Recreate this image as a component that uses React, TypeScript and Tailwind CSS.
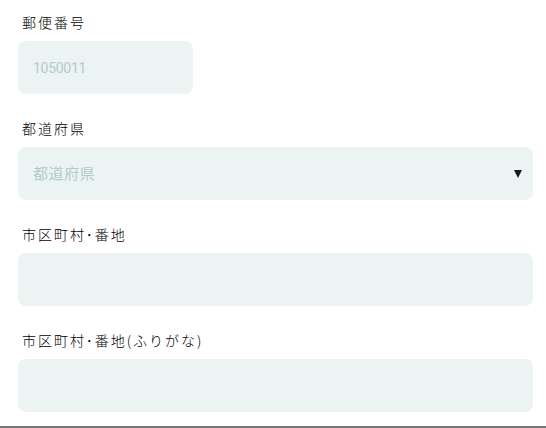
import React from "react";

const font = { fontFamily: '"Noto Sans CJK JP", "Noto Sans", sans-serif' };

function Label({ children }: { children: React.ReactNode }) {
  return (
    <div className="pl-1 h-5 text-[14px] leading-5 tracking-[0.14em] font-light text-black">{children}</div>
  );
}

export default function App() {
  return (
    <div className="w-[546px] h-[428px] bg-white border-b-2 border-[#777] overflow-hidden" style={font}>
      <div className="flex flex-col pt-[12px] pl-[18px] pr-[13px] gap-6">
        <div className="flex flex-col gap-[9px]">
          <Label>郵便番号</Label>
          <input
            className="w-[175px] h-[53px] rounded-lg bg-[#ebf4f3] px-[15px] text-[14px] tracking-[-0.02em] outline-none placeholder:text-[#b4cbc7]"
            placeholder="1050011"
            style={{ fontFamily: 'Roboto, "Noto Sans", sans-serif' }}
          />
        </div>
        <div className="flex flex-col gap-[9px]">
          <Label>都道府県</Label>
          <div className="relative h-[53px] rounded-lg bg-[#ebf4f3] flex items-center px-[15px]">
            <span className="text-[15px] tracking-[0.04em] text-[#b4cbc7]">都道府県</span>
            <span className="absolute right-[11px] top-[23px] w-0 h-0 border-l-[4px] border-r-[4px] border-t-[8px] border-l-transparent border-r-transparent border-t-[#1a1a1a]"></span>
          </div>
        </div>
        <div className="flex flex-col gap-[9px]">
          <Label>市区町村･番地</Label>
          <input className="h-[53px] rounded-lg bg-[#ebf4f3] px-[15px] outline-none" />
        </div>
        <div className="flex flex-col gap-[9px]">
          <Label>市区町村･番地(ふりがな)</Label>
          <input className="h-[53px] rounded-lg bg-[#ebf4f3] px-[15px] outline-none" />
        </div>
      </div>
    </div>
  );
}
